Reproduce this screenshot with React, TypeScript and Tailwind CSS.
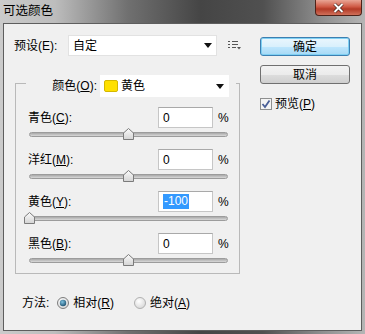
import React from 'react';

const font = { fontFamily: '"Liberation Sans", "Noto Sans CJK SC", sans-serif' };

interface Channel {
  label: string;
  key: string;
  value: number;
  selected?: boolean;
}

const channels: Channel[] = [
  { label: '青色', key: 'C', value: 0 },
  { label: '洋红', key: 'M', value: 0 },
  { label: '黄色', key: 'Y', value: -100, selected: true },
  { label: '黑色', key: 'B', value: 0 },
];

const Hot: React.FC<{ k: string }> = ({ k }) => (
  <>
    (<span className="underline underline-offset-1">{k}</span>)
  </>
);

const Thumb = () => (
  <svg width="11" height="12" viewBox="0 0 11 12">
    <defs>
      <linearGradient id="tg" x1="0" y1="0" x2="0" y2="1">
        <stop offset="0" stopColor="#fbfbfb" />
        <stop offset="1" stopColor="#d4d4d4" />
      </linearGradient>
    </defs>
    <path d="M0.5 11.5 V5 L5.5 0.5 L10.5 5 V11.5 Z" fill="url(#tg)" stroke="#7b7b7b" />
  </svg>
);

const Slider: React.FC<{ value: number }> = ({ value }) => {
  const pct = (value + 100) / 200;
  return (
    <div className="relative h-[12px] w-[199px] ml-[1px] flex items-center">
      <div className="h-[5px] w-full rounded-full border border-[#9c9c9c] bg-[linear-gradient(#a9a9a9,#d9d9d9)]" />
      <div className="absolute top-0 -ml-[5px]" style={{ left: `${pct * 198}px` }}>
        <Thumb />
      </div>
    </div>
  );
};

const Row: React.FC<{ c: Channel; last?: boolean }> = ({ c, last }) => (
  <div className={last ? '' : 'mb-[9px]'}>
    <div className="flex items-center h-[21px] w-[200px]">
      <span className="flex-1">
        {c.label}
        <Hot k={c.key} />:
      </span>
      <div className="w-[55px] h-[21px] bg-white border border-[#c6c6c6] border-t-[#a9a9a9] flex items-center pl-[4px]">
        {c.selected ? (
          <span className="bg-[#3399ff] text-white leading-[15px] px-[1px]">{c.value}</span>
        ) : (
          <span>{c.value}</span>
        )}
      </div>
      <span className="ml-[5px] w-[10px] text-[12px]">%</span>
    </div>
    <Slider value={c.value} />
  </div>
);

const Arrow = () => (
  <svg width="8" height="5" viewBox="0 0 8 5">
    <path d="M0 0 H8 L4 5 Z" fill="#111" />
  </svg>
);

const Radio: React.FC<{ on?: boolean }> = ({ on }) => (
  <svg width="12" height="12" viewBox="0 0 12 12">
    <defs>
      <radialGradient id="rb" cx="0.4" cy="0.35" r="0.7">
        <stop offset="0" stopColor="#ffffff" />
        <stop offset="1" stopColor="#d6d6d6" />
      </radialGradient>
      <radialGradient id="rd" cx="0.4" cy="0.35" r="0.7">
        <stop offset="0" stopColor="#7fc2e0" />
        <stop offset="1" stopColor="#1b4f6e" />
      </radialGradient>
    </defs>
    <circle cx="6" cy="6" r="5.5" fill="url(#rb)" stroke={on ? '#7d7d7d' : '#b0b0b0'} />
    {on && <circle cx="6" cy="6" r="3.2" fill="url(#rd)" />}
  </svg>
);

export default function App() {
  return (
    <div
      className="w-[365px] h-[334px] flex flex-col text-[12px] text-black bg-[linear-gradient(to_right,#cbcbcb_0%,#bdbdbd_15%,#707070_35%,#454545_55%,#505050_72%,#8e8e8e_88%,#b5b5b5_100%)]"
      style={font}
    >
      <div className="h-[23px] flex items-start">
        <span className="pl-[3px] pt-[3px] text-[12.5px] leading-[16px]">可选颜色</span>
        <div className="ml-auto mr-[3px] w-[47px] h-[16px] rounded-b-[4px] border border-t-0 border-[#4e2219] bg-[linear-gradient(#e9a595,#cf5a45_45%,#b33a26_60%,#d0705a)] flex items-center justify-center">
          <svg width="11" height="10" viewBox="0 0 11 10">
            <path d="M1.5 1 L9.5 9 M9.5 1 L1.5 9" stroke="#3a1a12" strokeWidth="3.2" />
            <path d="M1.5 1 L9.5 9 M9.5 1 L1.5 9" stroke="#ffffff" strokeWidth="2" />
          </svg>
        </div>
      </div>
      <div className="flex-1 mx-[3px] mb-[3px] bg-[#f0f0f0] border border-[#5e5e5e] flex">
        <div className="w-[237px] pl-[10px] pt-[11px]">
          <div className="flex items-center h-[21px]">
            <span className="w-[54px]">预设(E):</span>
            <div className="w-[149px] h-[21px] bg-white border border-[#e2e2e2] flex items-center pl-[4px] pr-[4px]">
              <span className="flex-1">自定</span>
              <Arrow />
            </div>
            <svg className="ml-[11px]" width="13" height="9" viewBox="0 0 13 9">
              <path d="M0 0.5 H2 M4 0.5 H10 M0 3.5 H2 M4 3.5 H10 M0 6.5 H2 M4 6.5 H8" stroke="#555" />
              <path d="M9 6 H13 L11 8.5 Z" fill="#555" />
            </svg>
          </div>
          <fieldset className="mt-[13px] ml-[1px] w-[225px] border border-[#b9b9b9] pb-[7px]">
            <legend className="ml-[10px] pt-[6px]">
              <div className="w-[210px] flex items-center justify-end pr-[7px]">
                <span className="mr-[3px]">
                  颜色<Hot k="O" />:
                </span>
                <div className="w-[129px] h-[22px] bg-white flex items-center pl-[4px] pr-[5px]">
                  <span className="w-[14px] h-[12px] bg-[#ffe000] border border-[#d4b800] rounded-[2px] mr-[3px]" />
                  <span className="flex-1">黄色</span>
                  <Arrow />
                </div>
              </div>
            </legend>
            <div className="pl-[12px] pt-[10px]">
              {channels.map((c, i) => (
                <Row key={c.key} c={c} last={i === channels.length - 1} />
              ))}
            </div>
          </fieldset>
          <div className="mt-[19px] h-[20px] flex items-center pl-[8px]">
            <span>方法:</span>
            <span className="ml-[8px] flex items-center">
              <Radio on />
            </span>
            <span className="ml-[4px]">
              相对<Hot k="R" />
            </span>
            <span className="ml-[20px] flex items-center">
              <Radio />
            </span>
            <span className="ml-[4px]">
              绝对<Hot k="A" />
            </span>
          </div>
        </div>
        <div className="pl-[19px] pt-[13px] flex flex-col">
          <button className="w-[90px] h-[19px] rounded-[3px] border border-[#3c7fb1] bg-[linear-gradient(#eaf6fd,#d9f0fc_50%,#bee6fd_51%,#a7d9f5)] shadow-[inset_0_0_0_1px_#7fd0f3] flex items-center justify-center leading-none">
            确定
          </button>
          <button className="mt-[9px] w-[90px] h-[19px] rounded-[3px] border border-[#707070] bg-[linear-gradient(#f2f2f2,#ebebeb_50%,#dddddd_51%,#cfcfcf)] flex items-center justify-center leading-none">
            取消
          </button>
          <div className="mt-[13px] flex items-center h-[13px]">
            <svg width="12" height="12" viewBox="0 0 12 12">
              <rect x="0.5" y="0.5" width="11" height="11" fill="#f4f4f4" stroke="#8e8f8f" />
              <path d="M2.5 6 L5 9 L9.5 2.5" stroke="#4a5f97" strokeWidth="1.8" fill="none" />
            </svg>
            <span className="ml-[3px]">
              预览<Hot k="P" />
            </span>
          </div>
        </div>
      </div>
    </div>
  );
}
